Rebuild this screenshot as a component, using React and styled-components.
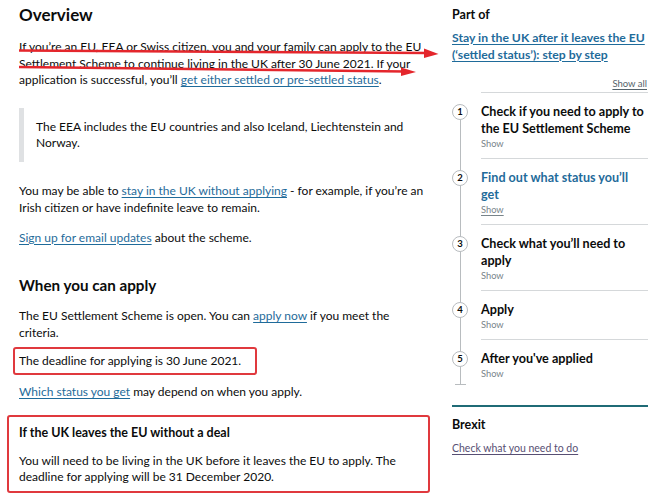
import React from "react";
import styled, { createGlobalStyle } from "styled-components";

const GlobalStyle = createGlobalStyle`
  body {
    margin: 0;
    background: #fff;
    color: #0b0c0c;
    font-family: Lato, "Liberation Sans", sans-serif;
  }
  * { box-sizing: border-box; }
`;

const steps = [
  { n: 1, title: "Check if you need to apply to the EU Settlement Scheme" },
  { n: 2, title: "Find out what status you’ll get", active: true },
  { n: 3, title: "Check what you’ll need to apply" },
  { n: 4, title: "Apply" },
  { n: 5, title: "After you've applied" },
];

function App() {
  return (
    <>
      <GlobalStyle />
      <Page>
        <Main>
          <Title>Overview</Title>
          <Para $mt={12}>
            If you’re an EU, EEA or Swiss citizen, you and your family can apply to the EU
            Settlement Scheme to continue living in the UK after 30 June 2021. If your
            application is successful, you’ll <Link href="#">get either settled or pre-settled status</Link>.
          </Para>
          <Inset>
            The EEA includes the EU countries and also Iceland, Liechtenstein and Norway.
          </Inset>
          <Para $mt={21}>
            You may be able to <Link href="#">stay in the UK without applying</Link> - for example, if you’re an
            Irish citizen or have indefinite leave to remain.
          </Para>
          <Para $mt={13.5}>
            <Link href="#">Sign up for email updates</Link> about the scheme.
          </Para>
          <Subtitle>When you can apply</Subtitle>
          <Para $mt={13}>
            The EU Settlement Scheme is open. You can <Link href="#">apply now</Link> if you meet the criteria.
          </Para>
          <Marked>The deadline for applying is 30 June 2021.</Marked>
          <Para $mt={9.25}>
            <Link href="#">Which status you get</Link> may depend on when you apply.
          </Para>
          <NoDeal>
            <NoDealTitle>If the UK leaves the EU without a deal</NoDealTitle>
            <Para $mt={11.75}>
              You will need to be living in the UK before it leaves the EU to apply. The
              deadline for applying will be 31 December 2020.
            </Para>
          </NoDeal>
        </Main>

        <Aside>
          <PartOf>Part of</PartOf>
          <SeriesLink href="#">Stay in the UK after it leaves the EU (‘settled status’): step by step</SeriesLink>
          <ShowAllRow>
            <ShowAll href="#">Show all</ShowAll>
          </ShowAllRow>
          <StepList>
            {steps.map((s) => (
              <Step key={s.n}>
                <Circle>{s.n}</Circle>
                <StepBody>
                  <StepTitle $active={s.active}>{s.title}</StepTitle>
                  <StepToggle $active={s.active}>Show</StepToggle>
                </StepBody>
              </Step>
            ))}
          </StepList>
          <Related>
            <RelatedTitle>Brexit</RelatedTitle>
            <RelatedLink href="#">Check what you need to do</RelatedLink>
          </Related>
        </Aside>

        <Arrows viewBox="0 0 665 100" width="665" height="100">
          <line x1="19" y1="50.5" x2="428" y2="53" stroke="#e4262c" strokeWidth="2.6" />
          <polygon points="424,48.5 438.5,54 424,58" fill="#e4262c" />
          <line x1="19" y1="67" x2="405" y2="71.5" stroke="#e4262c" strokeWidth="2.6" />
          <polygon points="401,67.5 416,72 401,76" fill="#e4262c" />
        </Arrows>
      </Page>
    </>
  );
}

const Page = styled.div`
  position: relative;
  display: flex;
  align-items: flex-start;
  gap: 22px;
  width: 665px;
  height: 500px;
  overflow: hidden;
  padding-left: 19px;
`;

const Main = styled.main`
  width: 411px;
  flex: none;
`;

const Title = styled.h1`
  margin: 3px 0 0;
  font-size: 17px;
  line-height: 24px;
  font-weight: 700;
`;

const Subtitle = styled.h2`
  margin: 29px 0 0;
  font-size: 15.2px;
  line-height: 20px;
  font-weight: 700;
`;

const Para = styled.p`
  margin: ${(p) => p.$mt}px 0 0;
  font-size: 12px;
  line-height: 16.5px;
`;

const Link = styled.a`
  color: #1f6b9a;
  text-decoration: underline;
  text-decoration-thickness: 1px;
  text-underline-offset: 2px;
`;

const Inset = styled.div`
  margin-top: 19.5px;
  border-left: 5px solid #dfe1e3;
  padding: 10.5px 0 10.5px 12px;
  font-size: 12px;
  line-height: 16.5px;
`;

const Marked = styled.p`
  margin: 6px 0 0 -6px;
  width: fit-content;
  padding: 3.5px 14px 3.5px 4px;
  border: 2px solid #e0393e;
  border-radius: 3px;
  font-size: 12px;
  line-height: 16.5px;
`;

const NoDeal = styled.div`
  margin: 14.75px 0 0 -12px;
  width: calc(100% + 12px);
  padding: 7px 10px 5px;
  border: 2px solid #e0393e;
  border-radius: 3px;
`;

const NoDealTitle = styled.h3`
  margin: 0;
  font-size: 12.5px;
  line-height: 17px;
  font-weight: 700;
`;

const Aside = styled.aside`
  width: 196px;
  flex: none;
  padding-top: 6px;
`;

const PartOf = styled.h2`
  margin: 0;
  font-size: 12.5px;
  line-height: 17px;
  font-weight: 700;
`;

const SeriesLink = styled.a`
  display: block;
  margin-top: 5.5px;
  color: #1f6b9a;
  font-size: 12.2px;
  line-height: 17px;
  font-weight: 700;
  text-decoration: underline;
  text-decoration-thickness: 1px;
  text-underline-offset: 2px;
`;

const ShowAllRow = styled.div`
  display: flex;
  justify-content: flex-end;
  margin: 14px 0 0 29px;
  padding-bottom: 2.5px;
  border-bottom: 1px solid #d5d8da;
  line-height: 13px;
`;

const ShowAll = styled.a`
  color: #55636b;
  font-size: 9.5px;
  text-decoration: underline;
  text-underline-offset: 1.5px;
  margin-right: 1px;
`;

const StepList = styled.ol`
  position: relative;
  list-style: none;
  margin: 0;
  padding: 0 0 5px;

  &::before {
    content: "";
    position: absolute;
    left: 7.5px;
    top: 20px;
    bottom: 0;
    width: 1.5px;
    background: #b8bcbf;
  }

  &::after {
    content: "";
    position: absolute;
    left: 3px;
    bottom: 0;
    width: 11px;
    height: 1.5px;
    background: #b8bcbf;
  }
`;

const Step = styled.li`
  display: grid;
  grid-template-columns: 29px 1fr;

  &:last-child > div:last-child {
    border-bottom: none;
    padding-bottom: 0;
  }
`;

const Circle = styled.span`
  position: relative;
  z-index: 1;
  display: flex;
  align-items: center;
  justify-content: center;
  width: 16px;
  height: 16px;
  margin-top: 10.5px;
  border: 1.5px solid #b8bcbf;
  border-radius: 50%;
  background: #fff;
  font-size: 9.5px;
  font-weight: 700;
  line-height: 1;
`;

const StepBody = styled.div`
  padding: 10px 0 8px;
  border-bottom: 1px solid #d5d8da;
`;

const StepTitle = styled.div`
  padding-right: 2px;
  font-size: 12.6px;
  line-height: 17px;
  font-weight: 700;
  color: ${(p) => (p.$active ? "#1f6b9a" : "#0b0c0c")};
`;

const StepToggle = styled.div`
  font-size: 9.3px;
  line-height: 13px;
  color: #78848a;
  text-decoration: ${(p) => (p.$active ? "underline" : "none")};
  text-underline-offset: 1.5px;
`;

const Related = styled.div`
  margin-top: 20px;
  border-top: 2px solid #1f6b76;
  padding-top: 9px;
`;

const RelatedTitle = styled.h3`
  margin: 0;
  font-size: 12.5px;
  line-height: 17px;
  font-weight: 700;
`;

const RelatedLink = styled.a`
  display: block;
  margin-top: 7.5px;
  color: #574f73;
  font-size: 10.5px;
  line-height: 14px;
  text-decoration: underline;
  text-underline-offset: 2px;
`;

const Arrows = styled.svg`
  position: absolute;
  left: 0;
  top: 0;
  pointer-events: none;
`;

export default App;
